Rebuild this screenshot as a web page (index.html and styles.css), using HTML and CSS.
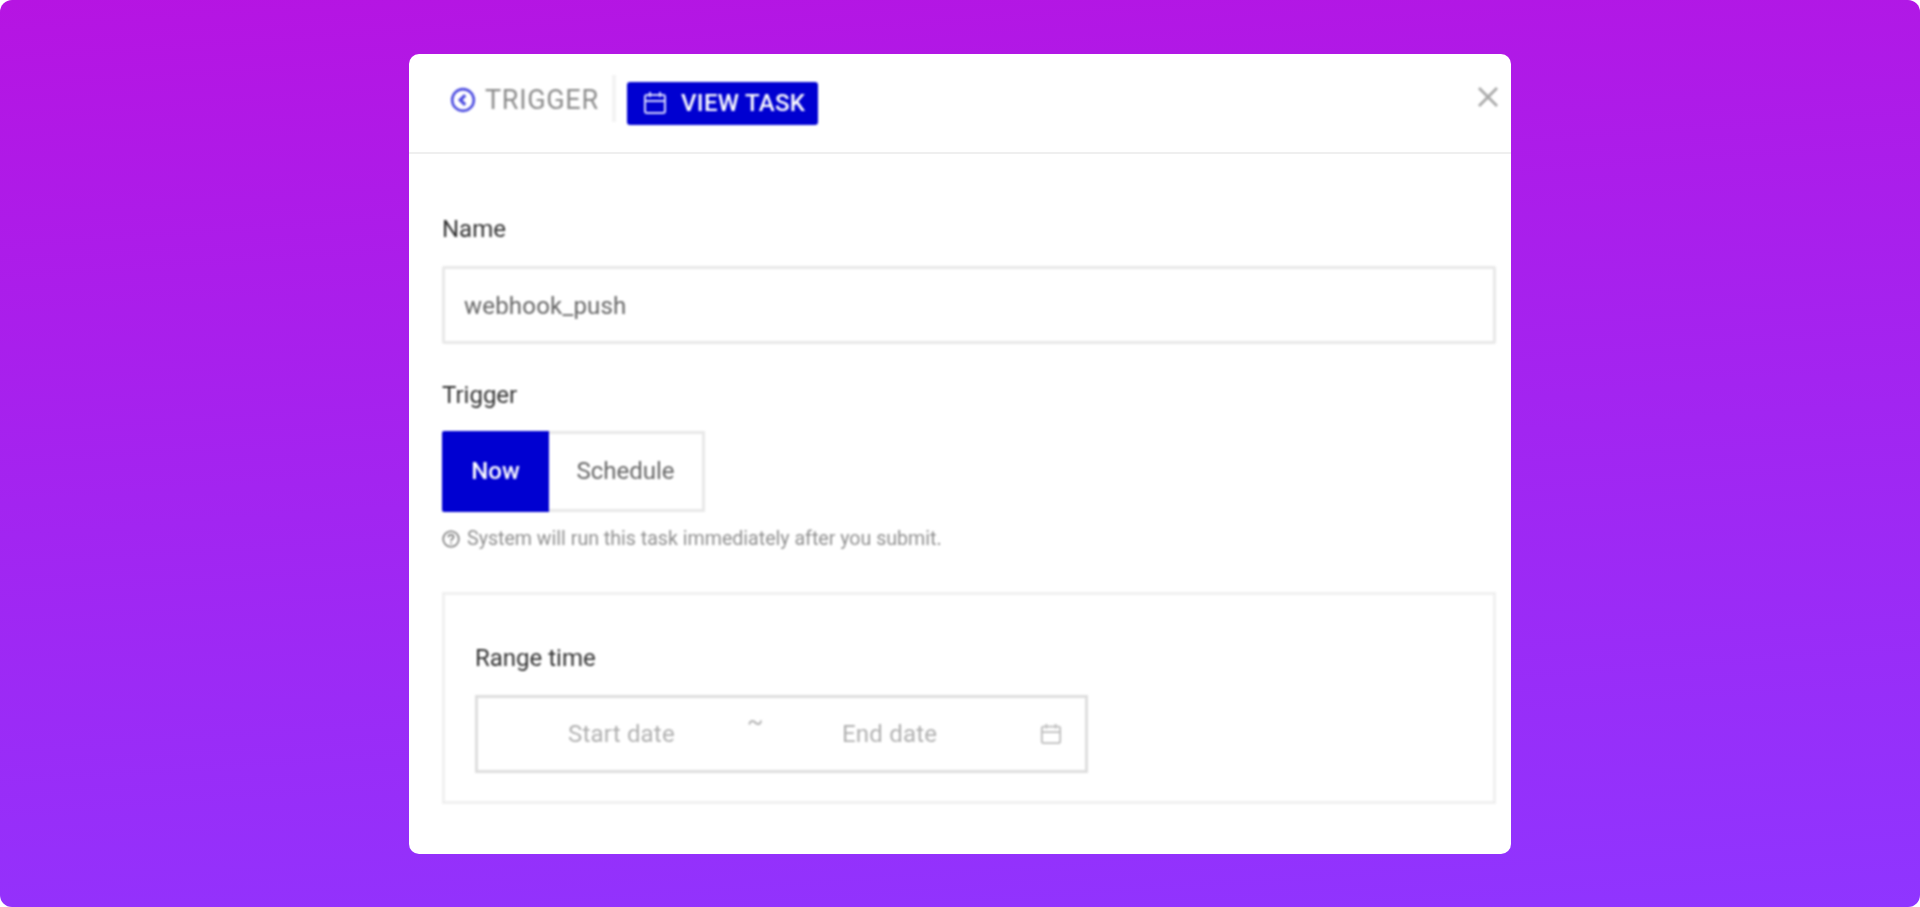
FILE: index.html
```html
<!DOCTYPE html>
<html lang="en">

<head>
  <meta charset="UTF-8" />
  <title>View task</title>
  <link rel="stylesheet" href="styles.css">
</head>

<body>
  <div class="page">
    <div class="modal">
      <div class="modal-header">
        <div class="tabs">
          <span class="tab-back">
            <svg class="back-icon" viewBox="0 0 24 24" fill="none" stroke="#4b4be0" stroke-width="2.4">
              <circle cx="12" cy="12" r="10" />
              <path d="M14 7.5 9.5 12l4.5 4.5" stroke-width="3" />
            </svg>
            TRIGGER
          </span>
          <span class="tab-divider"></span>
          <button class="tab-active">
            <svg class="tab-icon" viewBox="0 0 24 24" fill="none" stroke="#d6d6ff" stroke-width="2">
              <rect x="2" y="4" width="20" height="18" rx="2" />
              <path d="M2 10h20M7 1v5M17 1v5" />
            </svg>
            VIEW TASK
          </button>
        </div>
        <svg class="close-icon" viewBox="0 0 22 22" fill="none" stroke="#a8a8a8" stroke-width="2.8">
          <path d="M2 2l18 18M20 2 2 20" />
        </svg>
      </div>

      <div class="modal-body">
        <label class="label">Name</label>
        <div class="input name-input">webhook_push</div>

        <label class="label trigger-label">Trigger</label>
        <div class="segment">
          <button class="segment-on">Now</button>
          <button class="segment-off">Schedule</button>
        </div>
        <p class="help">
          <svg class="help-icon" viewBox="0 0 18 18" fill="none" stroke="#777777" stroke-width="1.6">
            <circle cx="9" cy="9" r="7.8" />
            <path d="M6.4 7.2C6.4 5.6 7.6 4.7 9 4.7s2.6.9 2.6 2.3c0 1.9-2.6 2-2.6 4" />
            <path d="M9 12.4v1.6" />
          </svg>
          System will run this task immediately after you submit.
        </p>

        <div class="panel">
          <label class="label">Range time</label>
          <div class="range">
            <span class="range-start">Start date</span>
            <span class="range-sep">~</span>
            <span class="range-end">End date</span>
            <svg class="range-icon" viewBox="0 0 24 24" fill="none" stroke="#bdbdbd" stroke-width="2">
              <rect x="2" y="4" width="20" height="18" rx="2" />
              <path d="M2 10h20M7 1v5M17 1v5" />
            </svg>
          </div>
        </div>
      </div>
    </div>
  </div>
</body>

</html>
```

FILE: styles.css
```css
:root {
  --primary-color: #0000d1;
  --line-color: #e8e8e8;
}

* {
  box-sizing: border-box;
}

body {
  margin: 0;
  background-color: #ffffff;
  font-family: 'Roboto', sans-serif;
  color: #444444;
}

.page {
  display: flex;
  align-items: center;
  justify-content: center;
  height: 907px;
  border-radius: 12px;
  background: linear-gradient(176deg, #b614e2 0%, #8f35ff 100%);
}

.modal {
  width: 1102px;
  height: 800px;
  background-color: #ffffff;
  border-radius: 10px;
}

.modal-header {
  display: flex;
  align-items: flex-start;
  justify-content: space-between;
  height: 100px;
  padding: 27px 12px 0 41px;
  border-bottom: 2px solid #efefef;
}

.tabs {
  display: flex;
  align-items: flex-start;
  filter: blur(0.8px);
}

.tab-back {
  display: flex;
  align-items: center;
  gap: 9px;
  width: 162px;
  height: 38px;
  font-size: 27px;
  letter-spacing: 0.7px;
  white-space: nowrap;
  color: #8c8c8c;
}

.back-icon {
  width: 26px;
  height: 26px;
}

.tab-divider {
  width: 4px;
  height: 47px;
  margin-top: -6px;
  background-color: #f3f3f3;
}

.tab-active {
  display: flex;
  align-items: center;
  gap: 14px;
  width: 191px;
  height: 43px;
  margin-top: 1px;
  margin-left: 11px;
  padding: 0 0 0 16px;
  border: 0;
  border-radius: 3px;
  font-family: inherit;
  font-size: 24px;
  font-weight: 500;
  letter-spacing: 0.3px;
  white-space: nowrap;
  color: #ffffff;
  background-color: var(--primary-color);
}

.tab-icon {
  width: 24px;
  height: 24px;
}

.close-icon {
  width: 22px;
  height: 22px;
  margin-top: 5px;
  filter: blur(0.8px);
}

.modal-body {
  padding: 61px 15px 0 33px;
  filter: blur(0.8px);
}

.label {
  display: block;
  height: 28px;
  font-size: 24px;
  line-height: 28px;
  color: #333333;
}

.input {
  display: flex;
  align-items: center;
  height: 78px;
  margin-top: 23px;
  padding: 2px 0 0 19px;
  border: 3px solid var(--line-color);
  border-radius: 2px;
  font-size: 24px;
  letter-spacing: 0.2px;
  color: #666666;
}

.trigger-label {
  margin-top: 37px;
}

.segment {
  display: flex;
  height: 81px;
  margin-top: 22px;
}

.segment button {
  height: 100%;
  padding: 0;
  font-family: inherit;
  font-size: 24px;
}

.segment-on {
  width: 107px;
  border: 0;
  border-radius: 2px 0 0 2px;
  font-weight: 500;
  color: #ffffff;
  background-color: var(--primary-color);
}

.segment-off {
  width: 156px;
  border: 3px solid var(--line-color);
  border-left: 0;
  color: #666666;
  background-color: #ffffff;
}

.help {
  display: flex;
  align-items: center;
  gap: 7px;
  height: 24px;
  margin: 15px 0 0;
  font-size: 19.6px;
  white-space: nowrap;
  color: #909090;
}

.help-icon {
  width: 18px;
  height: 18px;
}

.panel {
  height: 212px;
  margin-top: 41px;
  padding: 49px 30px 0;
  border: 3px solid #f0f0f0;
}

.range {
  display: flex;
  align-items: center;
  width: 613px;
  height: 78px;
  margin-top: 23px;
  border: 3px solid #dedede;
  font-size: 24px;
  letter-spacing: 0.2px;
  color: #b0b0b0;
}

.range-start {
  margin-left: 90px;
  width: 179px;
}

.range-sep {
  width: 95px;
  margin-bottom: 24px;
}

.range-end {
  width: 198px;
}

.range-icon {
  width: 22px;
  height: 22px;
}
```
